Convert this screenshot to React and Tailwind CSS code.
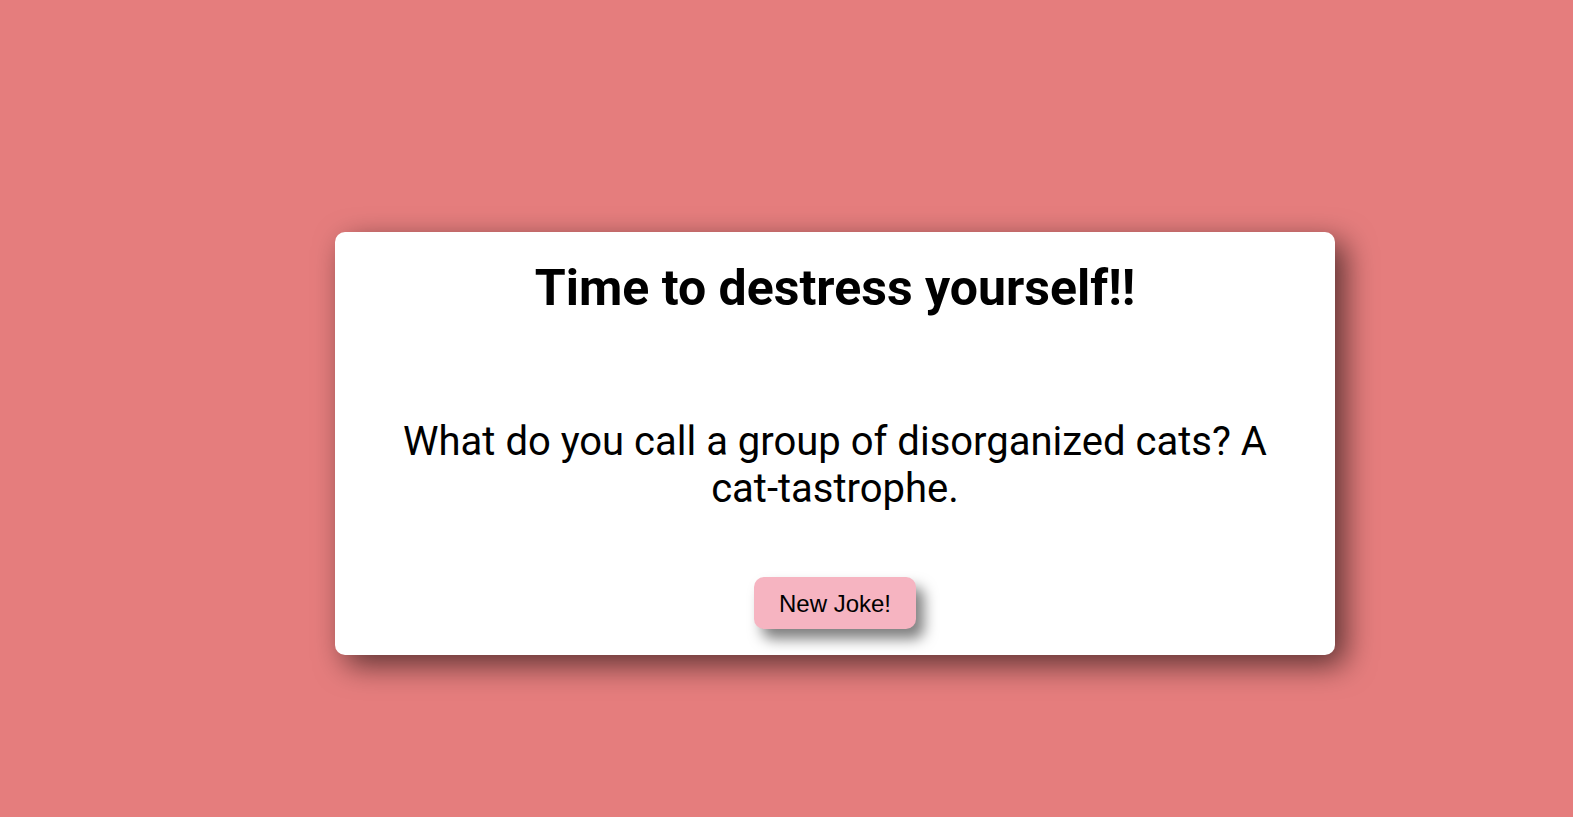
import React, { useState } from 'react';

const jokes = [
  "What do you call a group of disorganized cats? A cat-tastrophe.",
  "Why don't skeletons fight each other? They don't have the guts.",
  "What do you call fake spaghetti? An impasta.",
];

const App = () => {
  const [index, setIndex] = useState(0);

  const nextJoke = () => {
    setIndex((i) => (i + 1) % jokes.length);
  };

  return (
    <div className="min-h-screen w-full bg-[#e57d7d] pt-[232px] pl-[335px]" style={{ fontFamily: 'Roboto, "Liberation Sans", sans-serif' }}>
      <div className="w-[1000px] h-[423px] bg-white rounded-[10px] shadow-[10px_10px_30px_rgba(0,0,0,0.6)] flex flex-col items-center px-[60px]">
        <h1 className="mt-[27px] text-[50px] leading-[normal] font-bold text-black text-center">
          Time to destress yourself!!
        </h1>
        <p className="mt-[101px] text-[40px] leading-[normal] text-black text-center">
          {jokes[index]}
        </p>
        <button
          onClick={nextJoke}
          className="mt-[65px] h-[52px] px-[25px] pt-[2px] rounded-[10px] bg-[#f6b4c1] text-[24px] text-black shadow-[8px_10px_14px_rgba(0,0,0,0.5)]"
          style={{ fontFamily: '"Liberation Sans", Arial, sans-serif' }}
        >
          New Joke!
        </button>
      </div>
    </div>
  );
};

export default App;
